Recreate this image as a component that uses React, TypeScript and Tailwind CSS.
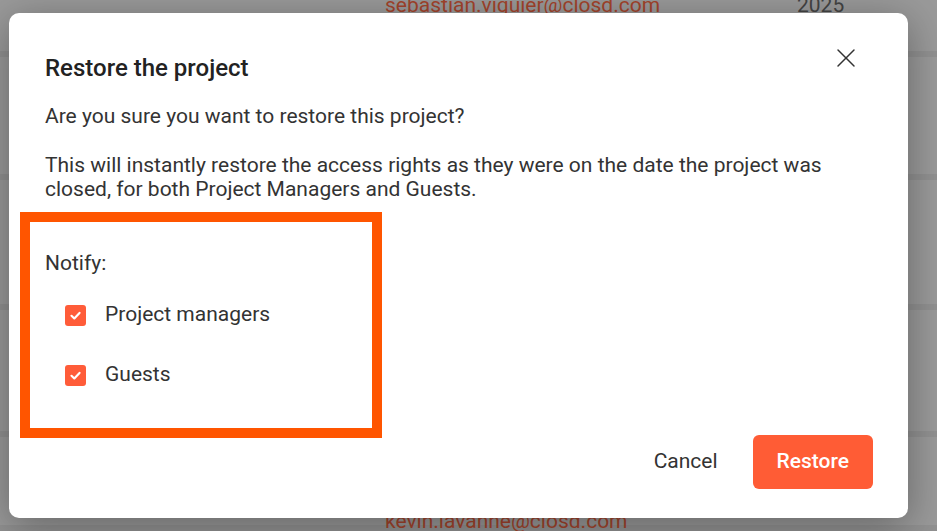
import { X } from 'lucide-react';

const rows = [
  { h: 'h-[57px]', email: 'sebastian.viguier@closd.com', year: '2025', shift: '-mt-[9px]' },
  { h: 'h-[123px]', email: '', year: '', shift: '' },
  { h: 'h-[130px]', email: '', year: '', shift: '' },
  { h: 'h-[127px]', email: '', year: '', shift: '' },
  { h: 'h-[94px]', email: 'kevin.lavanne@closd.com', year: '', shift: 'mt-[70px]' },
];

const CheckRow = ({ label }: { label: string }) => (
  <label className="flex items-center h-[40px] pl-[20px] gap-[19px]">
    <span className="w-[21px] h-[21px] rounded-[3px] bg-[#ff5c39] flex items-center justify-center">
      <svg width="13" height="13" viewBox="0 0 12 12" fill="none">
        <path d="M2.3 6.3 L4.9 8.7 L9.7 3.6" stroke="white" strokeWidth="2" strokeLinecap="round" strokeLinejoin="round" />
      </svg>
    </span>
    <span className="text-[21px] text-[#333]">{label}</span>
  </label>
);

const App = () => {
  return (
    <div
      className="relative w-[937px] h-[531px] overflow-hidden bg-[#9a9a9a]"
      style={{ fontFamily: 'Roboto, "Noto Sans", sans-serif' }}
    >
      {/* table behind the overlay */}
      <div className="flex flex-col">
        {rows.map((r, i) => (
          <div key={i} className={`${r.h} border-b-[6px] border-[#919191] flex items-start`}>
            {r.email && (
              <div className={`flex ${r.shift} text-[21px] leading-[28px]`}>
                <span className="ml-[385px] w-[412px] text-[#a3442c]">{r.email}</span>
                <span className="text-[#444]">{r.year}</span>
              </div>
            )}
          </div>
        ))}
      </div>

      {/* dialog */}
      <div className="absolute left-[9px] top-[13px] w-[899px] h-[505px] rounded-[10px] bg-white shadow-[0_8px_40px_rgba(0,0,0,0.35)] pt-[39px] pl-[36px] pr-[35px] pb-[30px] flex flex-col">
        <button className="absolute right-[46px] top-[29px] text-[#333]">
          <X className="w-[32px] h-[32px]" strokeWidth={1.1} />
        </button>

        <h2 className="text-[24px] leading-[32px] font-medium text-[#222]">Restore the project</h2>
        <p className="mt-[20px] text-[21px] leading-[24px] text-[#333]">
          Are you sure you want to restore this project?
        </p>
        <p className="mt-[25px] text-[21px] leading-[24px] text-[#333]">
          This will instantly restore the access rights as they were on the date the project was closed, for both Project Managers and Guests.
        </p>

        <div className="mt-[11px] flex justify-between">
          <div className="-ml-[25px] w-[362px] mb-[51px] border-[10px] border-[#ff5500] pl-[15px] pt-[29px] pb-[33px]">
            <div className="text-[21px] leading-[24px] text-[#333]">Notify:</div>
            <div className="mt-[20px] flex flex-col gap-[20px]">
              <CheckRow label="Project managers" />
              <CheckRow label="Guests" />
            </div>
          </div>

          <div className="self-end flex items-center gap-[19px]">
            <button className="px-[16px] h-[54px] text-[21px] text-[#333]">Cancel</button>
            <button className="h-[54px] px-[24px] rounded-[6px] bg-[#ff5c35] text-white text-[21px] font-medium">
              Restore
            </button>
          </div>
        </div>
      </div>
    </div>
  );
};

export default App;
